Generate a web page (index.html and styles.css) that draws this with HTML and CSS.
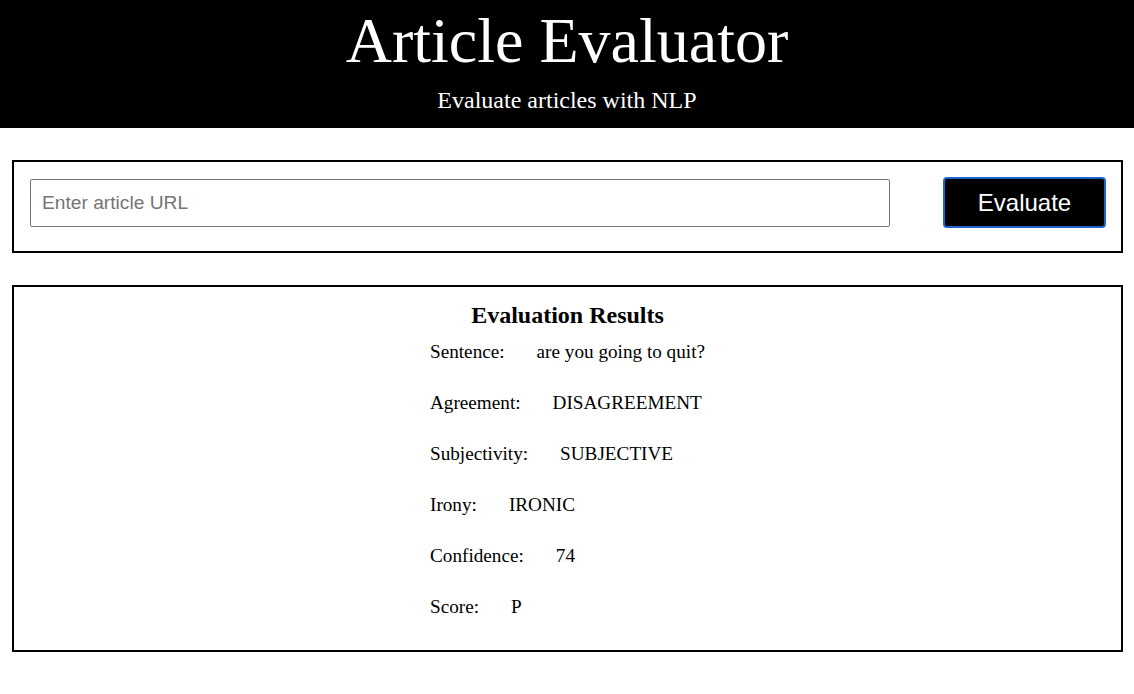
FILE: index.html
```html
<!DOCTYPE html>
<html lang="en">
<head>
<meta charset="utf-8">
<title>Article Evaluator</title>
<link rel="stylesheet" href="styles.css">
</head>
<body>
<header class="site-header">
  <h1 class="site-title">Article Evaluator</h1>
  <p class="site-subtitle">Evaluate articles with NLP</p>
</header>
<main class="main">
  <section class="panel form-panel">
    <form class="eval-form">
      <input class="url-input" type="text" placeholder="Enter article URL">
      <button class="eval-button" type="button">Evaluate</button>
    </form>
  </section>
  <section class="panel results-panel">
    <h2 class="results-title">Evaluation Results</h2>
    <div class="results-list">
      <div class="result-row"><span class="result-label">Sentence:</span><span class="result-value">are you going to quit?</span></div>
      <div class="result-row"><span class="result-label">Agreement:</span><span class="result-value">DISAGREEMENT</span></div>
      <div class="result-row"><span class="result-label">Subjectivity:</span><span class="result-value">SUBJECTIVE</span></div>
      <div class="result-row"><span class="result-label">Irony:</span><span class="result-value">IRONIC</span></div>
      <div class="result-row"><span class="result-label">Confidence:</span><span class="result-value">74</span></div>
      <div class="result-row"><span class="result-label">Score:</span><span class="result-value">P</span></div>
    </div>
  </section>
</main>
</body>
</html>
```

FILE: styles.css
```css
html, body {
  margin: 0;
  padding: 0;
  background: #ffffff;
  font-family: "Liberation Serif", "Times New Roman", serif;
  color: #000;
}

.site-header {
  background: #000;
  color: #fff;
  text-align: center;
  height: 128px;
  box-sizing: border-box;
  padding-top: 5px;
}

.site-title {
  margin: 0;
  font-size: 64px;
  font-weight: normal;
  line-height: 71px;
}

.site-subtitle {
  margin: 11px 0 0;
  font-size: 24px;
  line-height: 27px;
}

.main {
  padding: 32px 11px 0 12px;
  display: flex;
  flex-direction: column;
  gap: 32px;
}

.panel {
  border: 2px solid #000;
}

.form-panel {
  padding: 15px 15px 23px 16px;
}

.eval-form {
  display: flex;
  align-items: center;
  gap: 53px;
  margin: 0;
}

.url-input {
  flex: 1;
  height: 48px;
  box-sizing: border-box;
  border: 1px solid #767676;
  border-radius: 2px;
  padding: 0 11px;
  font-family: "Liberation Sans", Arial, sans-serif;
  font-size: 19.2px;
  color: #000;
  background: #fff;
}

.url-input::placeholder {
  color: #757575;
}

.eval-button {
  width: 163px;
  height: 51px;
  box-sizing: border-box;
  background: #000;
  color: #fff;
  border: 2px solid #1f63d3;
  border-radius: 4px;
  font-family: "Liberation Sans", Arial, sans-serif;
  font-size: 24px;
  padding: 0;
  cursor: pointer;
}

.results-panel {
  padding: 14px 0 32px;
  display: flex;
  flex-direction: column;
  align-items: center;
}

.results-title {
  margin: 0;
  font-size: 24px;
  line-height: 28px;
  font-weight: bold;
}

.results-list {
  margin-top: 12px;
  display: flex;
  flex-direction: column;
  gap: 29px;
  font-size: 19.2px;
  line-height: 22px;
}

.result-row {
  display: flex;
  gap: 32px;
}
```
